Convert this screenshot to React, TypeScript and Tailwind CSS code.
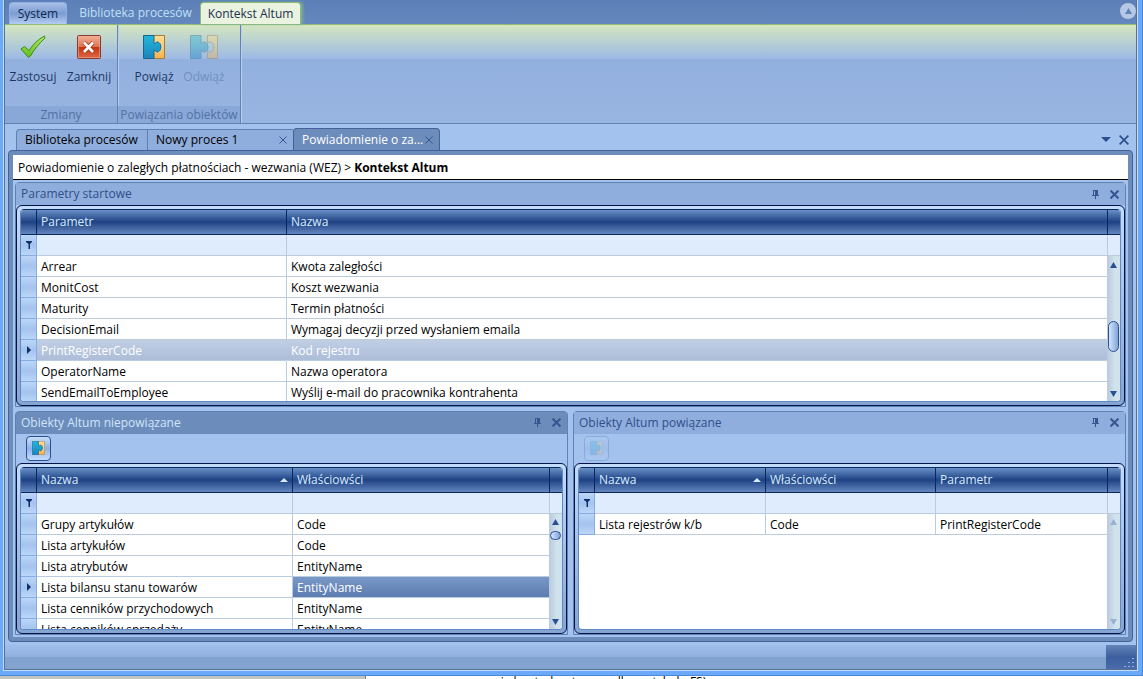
import { Fragment, type ReactNode } from "react";
import clsx from "clsx";

type Column = { label: string; width?: string; sorted?: boolean };

type DataGridProps = {
  name: string;
  columns: Column[];
  rows: string[][];
  currentRow?: number;
  selectedRow?: number;
  selectedCell?: [number, number];
  thumb?: string;
};

const PARAMETERS = [
  ["Arrear", "Kwota zaległości"],
  ["MonitCost", "Koszt wezwania"],
  ["Maturity", "Termin płatności"],
  ["DecisionEmail", "Wymagaj decyzji przed wysłaniem emaila"],
  ["PrintRegisterCode", "Kod rejestru"],
  ["OperatorName", "Nazwa operatora"],
  ["SendEmailToEmployee", "Wyślij e-mail do pracownika kontrahenta"],
];

const UNLINKED = [
  ["Grupy artykułów", "Code"],
  ["Lista artykułów", "Code"],
  ["Lista atrybutów", "EntityName"],
  ["Lista bilansu stanu towarów", "EntityName"],
  ["Lista cenników przychodowych", "EntityName"],
  ["Lista cenników sprzedaży", "EntityName"],
];

const LINKED = [["Lista rejestrów k/b", "Code", "PrintRegisterCode"]];

const CheckIcon = () => (
  <svg width="26" height="24" viewBox="0 0 26 24">
    <defs>
      <linearGradient id="check" x1="0" y1="0" x2="0" y2="1">
        <stop offset="0" stopColor="#b4ec5c" />
        <stop offset="1" stopColor="#5cbb22" />
      </linearGradient>
    </defs>
    <path
      d="M1 14 L4.5 11.5 L9 15.5 C13 9.500 18 4.500 24.500 1 L25 3 C19 8.500 14.500 14 10.500 21 L8.500 22.500 Z"
      fill="url(#check)"
      stroke="#3f8a1c"
      strokeWidth="1"
      strokeLinejoin="round"
    />
  </svg>
);

const CloseBoxIcon = () => (
  <svg width="24" height="24" viewBox="0 0 24 24">
    <defs>
      <linearGradient id="closebox" x1="0" y1="0" x2="0" y2="1">
        <stop offset="0" stopColor="#f2b49c" />
        <stop offset="0.5" stopColor="#dc7050" />
        <stop offset="0.52" stopColor="#c83410" />
        <stop offset="1" stopColor="#dc6c48" />
      </linearGradient>
    </defs>
    <rect x="0.5" y="0.5" width="23" height="23" rx="1" fill="url(#closebox)" stroke="#8a3a2c" />
    <rect x="1.5" y="1.5" width="21" height="21" fill="none" stroke="#f0a890" strokeOpacity="0.6" />
    <path d="M7 7.500 L16 17 M16 7.500 L7 17" stroke="#a03018" strokeWidth="4" />
    <path d="M7 7.500 L16 17 M16 7.500 L7 17" stroke="#fff" strokeWidth="2.600" />
  </svg>
);

const PuzzleIcon = ({ split = false, small = false }: { split?: boolean; small?: boolean }) => (
  <svg
    width={small ? 13 : split ? 28 : 22}
    height={small ? 14 : 24}
    viewBox={split ? "0 0 28 24" : "0 0 22 24"}
    preserveAspectRatio="none"
  >
    <defs>
      <linearGradient id="puzzleBlue" x1="0" y1="0" x2="0" y2="1">
        <stop offset="0" stopColor="#22b8dc" />
        <stop offset="1" stopColor="#1a84bc" />
      </linearGradient>
      <linearGradient id="puzzleGold" x1="0" y1="0" x2="0" y2="1">
        <stop offset="0" stopColor="#ffdc94" />
        <stop offset="1" stopColor="#f6b44c" />
      </linearGradient>
    </defs>
    {split ? (
      <path
        d="M17.500 0.500 H27.500 V23.500 H17.500 V16.500 C20 18.500 24 16.500 24 12 C24 7.500 20 5.500 17.500 8 Z"
        fill="url(#puzzleGold)"
        stroke="#9a8254"
      />
    ) : (
      <>
        <path d="M10.500 0.500 H21.500 V23.500 H10.500 Z" fill="url(#puzzleGold)" stroke="#a87c34" />
        <circle cx="14" cy="12" r="5.500" fill="#ffe8b4" />
      </>
    )}
    <path
      d="M0.500 0.500 H11 V8.500 C12.500 8.500 12.500 7 14.500 7 C16.500 7 18 9.500 18 12 C18 14.500 16.500 17 14.500 17 C12.500 17 12.500 15.500 11 15.500 V23.500 H0.500 Z"
      fill="url(#puzzleBlue)"
      stroke="#1c6490"
    />
  </svg>
);

const CrossIcon = ({ size = 8, weight = 1.5 }: { size?: number; weight?: number }) => (
  <svg width={size} height={size} viewBox="0 0 8 8">
    <path d="M0.500 0.500 L7.500 7.500 M7.500 0.500 L0.500 7.500" stroke="currentColor" strokeWidth={weight} />
  </svg>
);

const PinIcon = () => (
  <svg width="7" height="9" viewBox="0 0 7 9" fill="currentColor">
    <path d="M1 0 H6 V5 H7 V6 H4 V9 H3 V6 H0 V5 H1 Z M2 1 V5 H3 V1 Z" fillRule="evenodd" />
  </svg>
);

const Arrow = ({ up = false }: { up?: boolean }) => (
  <svg width="7" height="6" viewBox="0 0 7 6" fill="currentColor">
    <path d={up ? "M3.500 0 L7 6 H0 Z" : "M0 0 H7 L3.500 6 Z"} />
  </svg>
);

const RibbonButton = ({ icon, label, disabled }: { icon: ReactNode; label: string; disabled?: boolean }) => (
  <button
    disabled={disabled}
    className="flex flex-col items-center gap-2 pt-[10px] text-[#1c3866] disabled:text-[#7290c0]"
  >
    <span className={clsx("flex h-6 items-center", disabled && "opacity-40")}>{icon}</span>
    <span className="leading-5">{label}</span>
  </button>
);

const RibbonGroup = ({ title, children, columns }: { title: string; children: ReactNode; columns: string }) => (
  <section className="flex flex-col border-r border-[#6482b0] shadow-[1px_0_0_#b8cff0]">
    <div className={clsx("grid flex-1 justify-center", columns)}>{children}</div>
    <h2 className="h-[17px] bg-[#89a8d7] text-center leading-[17px] text-[#5272a6]">{title}</h2>
  </section>
);

const Ribbon = () => (
  <header>
    <nav className="flex h-6 items-end bg-linear-to-b from-[#5b7fb6] to-[#6488be] pl-1">
      <button className="h-[22px] w-[58px] rounded-t-sm border border-b-0 border-[#8fb0e4] bg-linear-to-b from-[#a8bfe6] via-[#7b9cd2] to-[#b4ccf2] text-[#10284e]">
        System
      </button>
      <button className="h-[22px] w-[133px] pl-1 text-[#bfe0f8]">Biblioteka procesów</button>
      <button className="h-[22px] w-[101px] rounded-t-sm border border-b-0 border-[#8dbb72] bg-[#eaf3e0] text-[#1c3050] shadow-[2px_0_3px_#7fae9a]">
        Kontekst Altum
      </button>
      <button
        aria-label="Minimalizuj wstążkę"
        className="mb-[5px] ml-auto flex size-4 items-center justify-center rounded-full bg-[#b6c8e4] text-[#5f83ba]"
      >
        <Arrow up />
      </button>
    </nav>
    <div className="flex h-[100px] border-t border-b border-t-[#8dbb72] border-b-[#6482b0] bg-[linear-gradient(#d4e6c0_0%,#9cb9e6_35%,#92b0de_35%,#99b5e2_100%)]">
      <RibbonGroup title="Zmiany" columns="w-28 grid-cols-2">
        <RibbonButton icon={<CheckIcon />} label="Zastosuj" />
        <RibbonButton icon={<CloseBoxIcon />} label="Zamknij" />
      </RibbonGroup>
      <RibbonGroup title="Powiązania obiektów" columns="w-[122px] grid-cols-[50px_50px]">
        <RibbonButton icon={<PuzzleIcon />} label="Powiąż" />
        <RibbonButton icon={<PuzzleIcon split />} label="Odwiąż" disabled />
      </RibbonGroup>
    </div>
  </header>
);

const DocumentTabs = () => (
  <nav className="flex h-[26px] items-end pr-[7px] pl-[11px] text-black">
    <button className="h-[21px] w-[131px] rounded-tl-sm border border-r-0 border-b-0 border-[#5f80b2] bg-[#8faedd] pl-2 text-left">
      Biblioteka procesów
    </button>
    <button className="flex h-[21px] w-[146px] items-center justify-between border border-r-0 border-b-0 border-[#5f80b2] bg-[#8faedd] pr-1.5 pl-2">
      Nowy proces 1
      <span className="text-[#34558f]">
        <CrossIcon weight={1} />
      </span>
    </button>
    <button className="flex h-[22px] w-[147px] items-center justify-between rounded-t-sm border border-b-0 border-[#44629a] bg-[#6c8cbc] pr-1.5 pl-2 text-white">
      Powiadomienie o za...
      <span className="text-[#34558f]">
        <CrossIcon weight={1} />
      </span>
    </button>
    <div className="ml-auto flex h-[21px] items-center gap-2 text-[#2b4f8a]">
      <button aria-label="Lista dokumentów">
        <svg width="10" height="5" viewBox="0 0 10 5" fill="currentColor">
          <path d="M0 0 H10 L5 5 Z" />
        </svg>
      </button>
      <button aria-label="Zamknij dokument">
        <CrossIcon size={10} weight={1.3} />
      </button>
    </div>
  </nav>
);

const ScrollBar = ({ thumb }: { thumb?: string }) => (
  <div
    className={clsx(
      "absolute top-[47px] right-0 bottom-0 flex w-[13px] flex-col items-center bg-linear-to-r from-[#b8cade] to-[#d0e2ec] to-60%",
      thumb ? "text-[#2b4f94]" : "text-[#9ab0d2]",
    )}
  >
    <button aria-label="W górę" disabled={!thumb} className="flex h-[17px] w-full items-center justify-center">
      <Arrow up />
    </button>
    <div className="flex w-full flex-1 flex-col items-center">
      {thumb && (
        <div
          className={clsx("w-[11px] rounded-full border border-[#2b4f94] bg-linear-to-r from-[#d4e6ff] to-[#80a4d8]", thumb)}
        />
      )}
    </div>
    <button aria-label="W dół" disabled={!thumb} className="flex h-[14px] w-full items-center justify-center">
      <Arrow />
    </button>
  </div>
);

const HEAD_CELL =
  "h-[26px] border-y border-r border-[#0a2860] bg-linear-to-b from-[#6a90c6] via-[#1f4284] via-50% to-[#6486be] p-0";
const GUTTER_CELL = "h-[21px] border-r border-b border-[#86ace2] bg-linear-to-b from-[#bcd6f8] via-[#a4c3ee] to-[#bcd6f8] p-0";

const DataGrid = ({
  name,
  columns,
  rows,
  currentRow,
  selectedRow,
  selectedCell,
  thumb,
}: DataGridProps) => (
  <div className="flex min-h-0 flex-1 rounded-md border border-[#00144a] bg-linear-to-b from-[#c4dcfa] to-[#86a4d0] p-[3px]">
    <div className="relative min-w-0 flex-1 overflow-hidden rounded-sm border-x border-b border-[#5f8ac8] bg-white">
      <table aria-label={name} className="w-full table-fixed border-separate border-spacing-0">
        <colgroup>
          <col className="w-4" />
          {columns.map((col) => (
            <col key={col.label} className={col.width} />
          ))}
          <col className="w-3" />
        </colgroup>
        <thead>
          <tr>
            <th className={HEAD_CELL} />
            {columns.map((col) => (
              <th key={col.label} scope="col" className={clsx(HEAD_CELL, "font-normal text-[#d8ecff]")}>
                <div className="flex items-center justify-between px-1">
                  {col.label}
                  {col.sorted && (
                    <svg width="8" height="4" viewBox="0 0 8 4" fill="currentColor">
                      <path d="M4 0 L8 4 H0 Z" />
                    </svg>
                  )}
                </div>
              </th>
            ))}
            <th className={clsx(HEAD_CELL, "border-r-0")} />
          </tr>
          <tr>
            <td className={GUTTER_CELL}>
              <svg className="mx-auto" width="6" height="8" viewBox="0 0 6 8" fill="#0f2f6c">
                <path d="M0 0 H6 V1 L4 3 V8 H2.500 V3 L0 1 Z" />
              </svg>
            </td>
            {columns.map((col) => (
              <td key={col.label} className="h-[21px] border-r border-b border-[#bccce0] bg-[#dfecfd] p-0">
                <input aria-label={`Filtr: ${col.label}`} className="block h-5 w-full px-1 outline-none" />
              </td>
            ))}
            <td className="border-b border-[#bccce0] bg-[#dfecfd] p-0" />
          </tr>
        </thead>
        <tbody>
          {rows.map((row, r) => (
            <tr key={row[0]}>
              <td className={GUTTER_CELL}>
                {r === currentRow && (
                  <svg className="mx-auto" width="4" height="8" viewBox="0 0 4 8" fill="#0f2f6c">
                    <path d="M0 0 L4 4 L0 8 Z" />
                  </svg>
                )}
              </td>
              {row.map((value, c) => (
                <td
                  key={columns[c].label}
                  className={clsx(
                    "h-[21px] truncate border-r border-b border-[#bccce0] p-0 pt-0.5 pl-1 leading-[18px]",
                    r === selectedRow && "border-r-transparent bg-linear-to-b from-[#c0cfe4] to-[#adbdd9] text-white",
                    selectedCell?.[0] === r && selectedCell[1] === c
                      ? "bg-linear-to-b from-[#7898c8] to-[#5c7cb0] text-white"
                      : r !== selectedRow && "text-black",
                  )}
                >
                  {value}
                </td>
              ))}
              <td className="p-0" />
            </tr>
          ))}
        </tbody>
      </table>
      <ScrollBar thumb={thumb} />
    </div>
  </div>
);

const Panel = ({ title, active, children }: { title: string; active?: boolean; children: ReactNode }) => (
  <section className="flex min-h-0 min-w-0 flex-1 flex-col rounded-t-sm border border-[#6081b4] bg-[#a3c2ed]">
    <div
      className={clsx(
        "flex h-[22px] shrink-0 items-center pr-1.5 pl-[5px]",
        active ? "bg-[#6c8cbc] text-[#d0e4fa]" : "bg-[#8faedd] text-[#2f4f8a]",
      )}
    >
      <h3>{title}</h3>
      <div className="ml-auto flex items-center gap-[11px] text-[#34558f]">
        <button aria-label="Przypnij">
          <PinIcon />
        </button>
        <button aria-label="Zamknij panel">
          <CrossIcon size={9} weight={1.8} />
        </button>
      </div>
    </div>
    {children}
  </section>
);

const PanelToolbar = ({ label, disabled }: { label: string; disabled?: boolean }) => (
  <div className="flex h-[29px] shrink-0 items-start px-2.5 pt-0.5">
    <button
      aria-label={label}
      disabled={disabled}
      className="flex size-[25px] items-center justify-center rounded border border-[#2c4f92] bg-linear-to-b from-[#c8dcfa] via-[#90b2e8] to-[#c4dcff] disabled:opacity-20"
    >
      <PuzzleIcon small />
    </button>
  </div>
);

// dots of the resize handle, one row per entry
const GRIP = [1, 2, 3];

const StatusBar = () => (
  <footer className="flex h-6 shrink-0 bg-linear-to-b from-[#a0bfec] from-0% via-[#90afdc] via-50% to-[#82a3d0] to-50%">
    <svg
      className="ml-auto bg-linear-to-b from-[#6484ba] via-[#3c5f9e] to-[#4a6cac]"
      width="30"
      height="24"
      viewBox="0 0 30 24"
      fill="#8fb0e0"
    >
      {GRIP.map((count, row) => (
        <Fragment key={count}>
          {Array.from({ length: count }, (_, i) => (
            <rect key={i} x={26 - i * 4} y={13 + row * 4} width="2" height="1" />
          ))}
        </Fragment>
      ))}
    </svg>
  </footer>
);

const App = () => {
  return (
    <div className="flex h-screen flex-col bg-[#c4c4c0] font-['Open_Sans','Noto_Sans',sans-serif] text-[12px] leading-4">
      <div className="flex min-h-0 flex-1 flex-col border-r border-b border-[#4c86d4] bg-[#6aaaf8] pr-1 pb-1 pl-[3px]">
        <div className="flex min-h-0 flex-1 flex-col border-x border-b border-[#c0dcf6]">
          <div className="flex min-h-0 flex-1 flex-col border-x border-b border-[#5a7090] bg-[#a3c2ed]">
            <Ribbon />
            <DocumentTabs />
            <main className="mx-[3px] mb-[3px] flex min-h-0 flex-1 flex-col rounded border border-[#44629a] bg-[#6c8cbc] p-1">
              <div className="flex h-[25px] shrink-0 items-center border-b border-black bg-white pt-0.5 pl-[5px] whitespace-pre text-black">
                Powiadomienie o zaległych płatnościach - wezwania (WEZ) &gt; <strong>Kontekst Altum</strong>
              </div>
              <div className="grid min-h-0 flex-1 grid-rows-2 gap-1 bg-[#a3c2ed] p-0.5">
                <Panel title="Parametry startowe">
                  <DataGrid
                    name="Parametry startowe"
                    columns={[{ label: "Parametr", width: "w-[250px]" }, { label: "Nazwa" }]}
                    rows={PARAMETERS}
                    currentRow={4}
                    selectedRow={4}
                    thumb="mt-12 h-[31px]"
                  />
                </Panel>
                <div className="flex min-h-0 gap-[5px]">
                  <Panel title="Obiekty Altum niepowiązane" active>
                    <PanelToolbar label="Powiąż obiekt" />
                    <DataGrid
                      name="Obiekty Altum niepowiązane"
                      columns={[{ label: "Nazwa", width: "w-[256px]", sorted: true }, { label: "Właściowści" }]}
                      rows={UNLINKED}
                      currentRow={3}
                      selectedCell={[3, 1]}
                      thumb="h-[9px]"
                    />
                  </Panel>
                  <Panel title="Obiekty Altum powiązane">
                    <PanelToolbar label="Odwiąż obiekt" disabled />
                    <DataGrid
                      name="Obiekty Altum powiązane"
                      columns={[
                        { label: "Nazwa", width: "w-[171px]", sorted: true },
                        { label: "Właściowści", width: "w-[170px]" },
                        { label: "Parametr" },
                      ]}
                      rows={LINKED}
                    />
                  </Panel>
                </div>
              </div>
            </main>
            <StatusBar />
          </div>
        </div>
      </div>
      {/* document window showing from underneath */}
      <div className="flex h-[3px] shrink-0 overflow-hidden">
        <div className="w-[32%] shrink-0 border-r border-[#808080]" />
        <p className="flex-1 bg-white pl-[90px] leading-3 text-black">wezwania kontrahentom według artykułu FS)</p>
      </div>
    </div>
  );
};

export default App;
